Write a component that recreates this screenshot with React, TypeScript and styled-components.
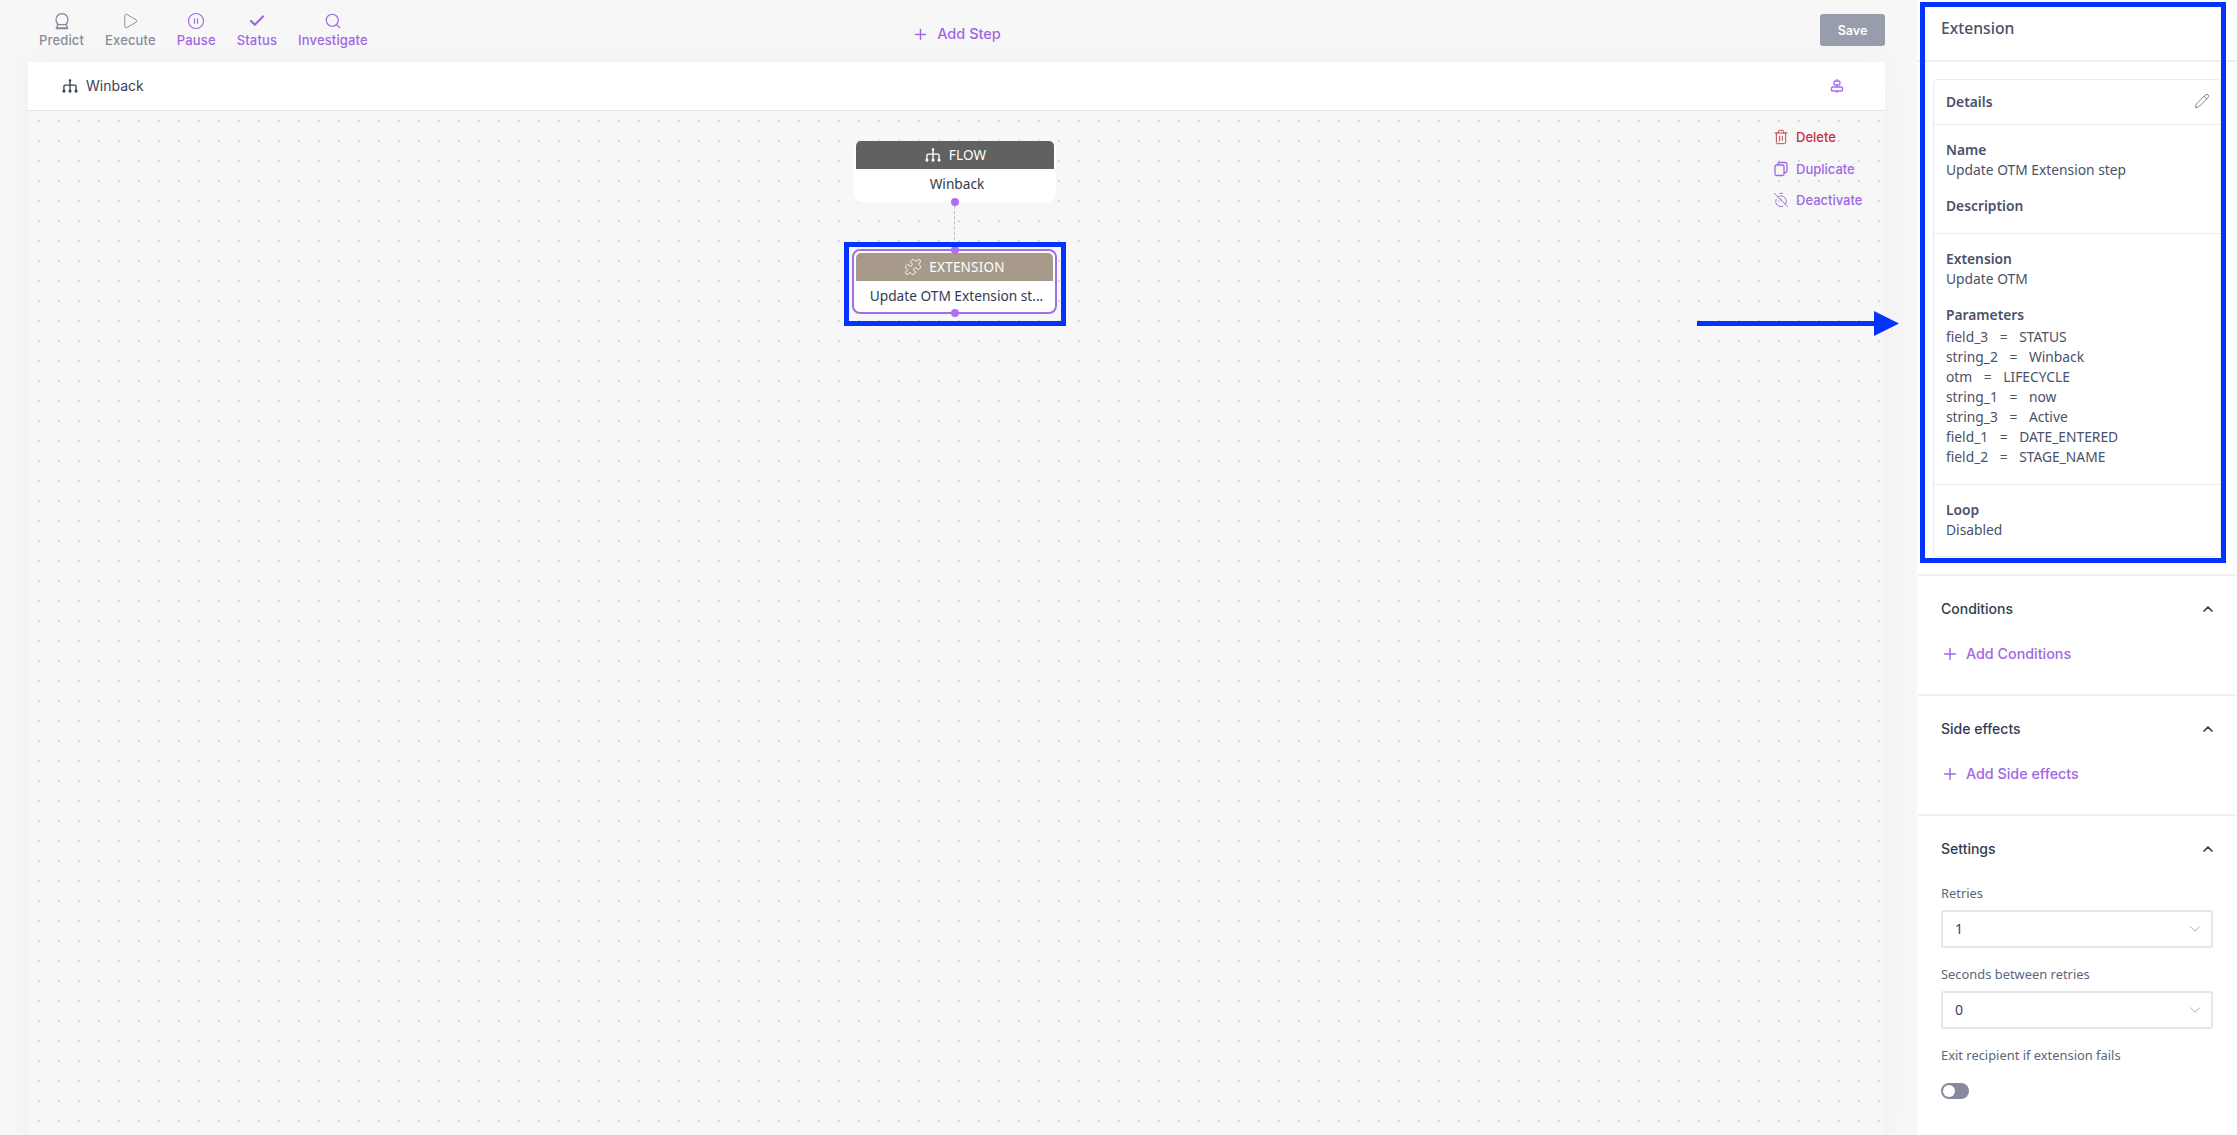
import React from 'react';
import styled, { createGlobalStyle } from 'styled-components';
import { Play, CirclePause, Check, Search, Plus, Trash2, TimerOff, Pencil, ChevronUp, ChevronDown, Puzzle } from 'lucide-react';

const Global = createGlobalStyle`
  html, body { margin: 0; padding: 0; background: #f7f7f8; }
  * { box-sizing: border-box; }
`;

const Page = styled.div`
  position: relative;
  display: flex;
  width: 2237px;
  height: 1135px;
  overflow: hidden;
  background: #f7f7f8;
  font-family: "Inter", "Liberation Sans", sans-serif;
`;

const Main = styled.main`
  display: flex;
  flex-direction: column;
  width: 1917px;
  padding: 0 32px 0 28px;
`;

const Toolbar = styled.header`
  display: grid;
  grid-template-columns: 1fr auto 1fr;
  align-items: center;
  height: 62px;
  flex: none;
`;

const Tools = styled.nav`
  display: flex;
  gap: 21px;
  padding-left: 11px;
`;

const Tool = styled.button<{ $active?: boolean }>`
  display: flex;
  flex-direction: column;
  align-items: center;
  gap: 2px;
  padding: 0;
  border: 0;
  background: none;
  font: 500 13px/16px "Inter", sans-serif;
  letter-spacing: 0.15px;
  color: ${p => (p.$active ? '#9f67e4' : '#868c9c')};
  margin-top: -3px;
  svg { display: block; }
`;

const AddStep = styled.button`
  display: flex;
  align-items: center;
  gap: 8px;
  padding: 0;
  margin-top: 6px;
  border: 0;
  background: none;
  color: #9f67e4;
  font: 500 14.5px/20px "Inter", sans-serif;
`;

const SaveButton = styled.button`
  justify-self: end;
  width: 65px;
  height: 32px;
  margin-top: -2px;
  border: 0;
  border-radius: 3px;
  background: #979dab;
  color: #fff;
  font: 600 12.5px/32px "Inter", sans-serif;
`;

const CanvasCard = styled.section`
  flex: 1;
  display: flex;
  flex-direction: column;
  box-shadow: 0 0 24px rgba(60, 60, 90, 0.05);
`;

const CanvasHeader = styled.div`
  display: flex;
  align-items: center;
  justify-content: space-between;
  flex: none;
  height: 49px;
  padding: 0 41px 0 33px;
  background: #fff;
  border-bottom: 1px solid #e4e4ec;
`;

const FlowTitle = styled.div`
  display: flex;
  align-items: center;
  gap: 7px;
  color: #3a4257;
  font: 400 14px/20px "Inter", sans-serif;
`;

const Canvas = styled.div`
  position: relative;
  flex: 1;
  background-color: #f7f7f8;
  background-image: radial-gradient(circle at center, #d6d6dc 0.9px, transparent 1.2px);
  background-size: 20px 20px;
  background-position: 1px 0;
`;

const Actions = styled.div`
  position: absolute;
  top: 16px;
  left: 1745px;
  display: flex;
  flex-direction: column;
  gap: 11.500px;
`;

const Action = styled.div<{ $danger?: boolean }>`
  display: flex;
  align-items: center;
  gap: 7px;
  height: 20px;
  color: ${p => (p.$danger ? '#c9303e' : '#9f67e4')};
  font: 500 13px/20px "Inter", sans-serif;
`;

const Node = styled.div<{ $x: number; $y: number; $selected?: boolean }>`
  position: absolute;
  left: ${p => p.$x}px;
  top: ${p => p.$y}px;
  width: ${p => (p.$selected ? 205 : 202)}px;
  height: ${p => (p.$selected ? 65 : 61)}px;
  padding: ${p => (p.$selected ? '2px' : '0 2px 0')};
  background: #fff;
  border-radius: 8px;
  border: ${p => (p.$selected ? '2px solid #a26ee6' : '0')};
`;

const NodeHead = styled.div<{ $tone: string }>`
  display: flex;
  align-items: center;
  justify-content: center;
  gap: 7px;
  height: 28px;
  background: ${p => p.$tone};
  border-radius: 5px 5px 0 0;
  color: #fff;
  font: 400 13.5px/28px "Noto Sans", sans-serif;
  letter-spacing: 0.2px;
`;

const NodeBody = styled.div`
  height: 29px;
  padding-left: 4px;
  color: #333b50;
  text-align: center;
  font: 400 13.7px/29px "Noto Sans", sans-serif;
  white-space: nowrap;
`;

const Port = styled.span<{ $x: number; $y: number }>`
  position: absolute;
  left: ${p => p.$x - 4}px;
  top: ${p => p.$y - 4}px;
  width: 8px;
  height: 8px;
  border-radius: 50%;
  background: #b06ef5;
`;

const Edge = styled.span`
  position: absolute;
  left: 926px;
  top: 95px;
  height: 44px;
  border-left: 1.5px dashed #bdbdc4;
`;

const Panel = styled.aside`
  width: 320px;
  flex: none;
  background: #fff;
`;

const PanelHeader = styled.div`
  height: 62px;
  padding: 18px 24px 0;
  border-bottom: 2px solid #eeeef3;
  color: #4a5168;
  font: 500 15.7px/20px "Noto Sans", sans-serif;
`;

const DetailCard = styled.div`
  margin: 17px 16px 17px;
  border: 1px solid #eaeaf0;
  border-radius: 4px;
`;

const CardHead = styled.div`
  display: flex;
  align-items: center;
  justify-content: space-between;
  height: 45px;
  padding: 0 10px 0 12px;
  border-bottom: 1px solid #eaeaf0;
  color: #4a5168;
  font: 600 13.800px/20px "Noto Sans", sans-serif;
  svg { color: #5f6577; margin-top: -3px; }
`;

const CardBlock = styled.div`
  padding: 15px 12px 17px;
  border-bottom: 1px solid #eaeaf0;
  &:last-child { border-bottom: 0; padding-bottom: 16px; }
`;

const FieldLabel = styled.div<{ $gap?: boolean }>`
  color: #4a5168;
  font: 600 13.800px/20px "Noto Sans", sans-serif;
  margin-top: ${p => (p.$gap ? 16 : 0)}px;
`;

const FieldValue = styled.div`
  color: #4a5168;
  font: 400 13.800px/20px "Noto Sans", sans-serif;
`;

const ParamList = styled.div`
  margin-top: 2px;
`;

const Param = styled(FieldValue)`
  white-space: pre;
  word-spacing: 2.200px;
`;

const Section = styled.section<{ $last?: boolean }>`
  border-top: 2px solid #eeeef3;
  border-radius: 4px 4px 0 0;
  padding: 23px 24px ${p => (p.$last ? 0 : 30)}px;
`;

const SectionTitle = styled.div`
  display: flex;
  align-items: center;
  justify-content: space-between;
  color: #343b50;
  font: 500 14px/20px "Inter", sans-serif;
  svg { margin-right: -3px; }
`;

const AddLink = styled.div`
  display: flex;
  align-items: center;
  gap: 7px;
  margin-top: 25px;
  color: #9f67e4;
  font: 500 14.3px/20px "Inter", sans-serif;
`;

const SettingLabel = styled.div<{ $first?: boolean }>`
  margin-top: ${p => (p.$first ? 24 : 16)}px;
  color: #5e667c;
  font: 400 12.900px/20px "Noto Sans", sans-serif;
`;

const Select = styled.div`
  display: flex;
  align-items: center;
  justify-content: space-between;
  height: 38px;
  margin-top: 7px;
  padding: 0 7px 0 12px;
  border: 2px solid #e5e5ec;
  border-radius: 3px;
  color: #3a4257;
  font: 400 14px/20px "Noto Sans", sans-serif;
  svg { color: #8a90a0; }
`;

const Toggle = styled.div`
  position: relative;
  width: 28px;
  height: 16px;
  margin-top: 18px;
  border-radius: 8px;
  background: #858b9c;
  &::after {
    content: '';
    position: absolute;
    left: 2px;
    top: 2px;
    width: 12px;
    height: 12px;
    border-radius: 50%;
    background: #fff;
  }
`;

const Highlight = styled.div<{ $x: number; $y: number; $w: number; $h: number }>`
  position: absolute;
  left: ${p => p.$x}px;
  top: ${p => p.$y}px;
  width: ${p => p.$w}px;
  height: ${p => p.$h}px;
  border: 5px solid #0433ff;
  pointer-events: none;
`;

const Arrow = styled.svg`
  position: absolute;
  left: 1697px;
  top: 310px;
`;

const FlowIcon = ({ size = 18, color = 'currentColor' }: { size?: number; color?: string }) => (
  <svg width={size} height={size} viewBox="0 0 16 16" fill="none" stroke={color} strokeWidth="1.2">
    <path d="M8 2.500V12M2.600 12V8.200a1 1 0 0 1 1-1h8.800a1 1 0 0 1 1 1V12" />
    <circle cx="8" cy="3" r="1.100" fill={color} stroke="none" />
    <circle cx="2.600" cy="12.500" r="1.400" fill={color} stroke="none" />
    <circle cx="8" cy="12.500" r="1.400" fill={color} stroke="none" />
    <circle cx="13.400" cy="12.500" r="1.400" fill={color} stroke="none" />
  </svg>
);

const BallIcon = () => (
  <svg width="18" height="18" viewBox="0 0 18 18" fill="none" stroke="#868c9c" strokeWidth="1.3" strokeLinecap="round">
    <path d="M5.200 12.200a6 6 0 1 1 7.600 0" />
    <path d="M4.500 12.600h9" />
    <path d="M3.600 16.200h10.800" strokeWidth="2" />
    <path d="M4.600 12.800 3.800 15.600M13.400 12.800l.8 2.800" />
  </svg>
);

const AlignIcon = () => (
  <svg width="14" height="16" viewBox="0 0 14 16" fill="none" stroke="#a56df0" strokeWidth="1.4" strokeLinejoin="round">
    <path d="M7 1v2M7 7v2M7 13v2" />
    <rect x="4" y="3" width="6" height="4" rx="1.500" />
    <rect x="1.500" y="9" width="11" height="4" rx="1" />
  </svg>
);

const DuplicateIcon = () => (
  <svg width="16" height="16" viewBox="0 0 16 16" fill="none" stroke="currentColor" strokeWidth="1.3" strokeLinejoin="round">
    <rect x="2" y="4" width="9" height="10.500" rx="1.500" />
    <path d="M5 4V2.800a1.300 1.300 0 0 1 1.300-1.300h6.200A1.500 1.500 0 0 1 14 3v7a1.500 1.500 0 0 1-1.500 1.500H11" />
  </svg>
);

const PARAMS = [
  'field_3  =  STATUS',
  'string_2  =  Winback',
  'otm  =  LIFECYCLE',
  'string_1  =  now',
  'string_3  =  Active',
  'field_1  =  DATE_ENTERED',
  'field_2  =  STAGE_NAME',
];

export default function App() {
  return (
    <Page>
      <Global />
      <Main>
        <Toolbar>
          <Tools>
            <Tool><BallIcon />Predict</Tool>
            <Tool><Play size={18} strokeWidth={1.3} />Execute</Tool>
            <Tool $active><CirclePause size={18} strokeWidth={1.5} />Pause</Tool>
            <Tool $active><Check size={18} strokeWidth={3} />Status</Tool>
            <Tool $active><Search size={18} strokeWidth={1.5} />Investigate</Tool>
          </Tools>
          <AddStep><Plus size={17} strokeWidth={2} />Add Step</AddStep>
          <SaveButton>Save</SaveButton>
        </Toolbar>
        <CanvasCard>
          <CanvasHeader>
            <FlowTitle><FlowIcon color="#3a4257" />Winback</FlowTitle>
            <AlignIcon />
          </CanvasHeader>
          <Canvas>
            <Edge />
            <Node $x={826} $y={30}>
              <NodeHead $tone="#616161"><FlowIcon color="#fff" />FLOW</NodeHead>
              <NodeBody>Winback</NodeBody>
            </Node>
            <Port $x={927} $y={91} />
            <Node $x={824} $y={138} $selected>
              <NodeHead $tone="#a89a8b"><Puzzle size={18} strokeWidth={1.2} />EXTENSION</NodeHead>
              <NodeBody>Update OTM Extension st...</NodeBody>
            </Node>
            <Port $x={927} $y={139} />
            <Port $x={927} $y={202} />
            <Actions>
              <Action $danger><Trash2 size={16} strokeWidth={1.4} />Delete</Action>
              <Action><DuplicateIcon />Duplicate</Action>
              <Action><TimerOff size={16} strokeWidth={1.4} />Deactivate</Action>
            </Actions>
          </Canvas>
        </CanvasCard>
      </Main>
      <Panel>
        <PanelHeader>Extension</PanelHeader>
        <DetailCard>
          <CardHead>Details<Pencil size={16} strokeWidth={1.2} /></CardHead>
          <CardBlock>
            <FieldLabel>Name</FieldLabel>
            <FieldValue>Update OTM Extension step</FieldValue>
            <FieldLabel $gap>Description</FieldLabel>
          </CardBlock>
          <CardBlock>
            <FieldLabel>Extension</FieldLabel>
            <FieldValue>Update OTM</FieldValue>
            <FieldLabel $gap>Parameters</FieldLabel>
            <ParamList>
              {PARAMS.map(p => <Param key={p}>{p}</Param>)}
            </ParamList>
          </CardBlock>
          <CardBlock>
            <FieldLabel>Loop</FieldLabel>
            <FieldValue>Disabled</FieldValue>
          </CardBlock>
        </DetailCard>
        <Section>
          <SectionTitle>Conditions<ChevronUp size={16} strokeWidth={2.5} /></SectionTitle>
          <AddLink><Plus size={18} strokeWidth={2} />Add Conditions</AddLink>
        </Section>
        <Section>
          <SectionTitle>Side effects<ChevronUp size={16} strokeWidth={2.5} /></SectionTitle>
          <AddLink><Plus size={18} strokeWidth={2} />Add Side effects</AddLink>
        </Section>
        <Section $last>
          <SectionTitle>Settings<ChevronUp size={16} strokeWidth={2.5} /></SectionTitle>
          <SettingLabel $first>Retries</SettingLabel>
          <Select>1<ChevronDown size={18} strokeWidth={1} /></Select>
          <SettingLabel>Seconds between retries</SettingLabel>
          <Select>0<ChevronDown size={18} strokeWidth={1} /></Select>
          <SettingLabel>Exit recipient if extension fails</SettingLabel>
          <Toggle />
        </Section>
      </Panel>
      <Highlight $x={844} $y={242} $w={222} $h={84} />
      <Highlight $x={1920} $y={2} $w={306} $h={561} />
      <Arrow width="204" height="27" viewBox="0 0 204 27">
        <path d="M0 11h177V1l25 12.500-25 12.500V16H0z" fill="#0433ff" />
      </Arrow>
    </Page>
  );
}
